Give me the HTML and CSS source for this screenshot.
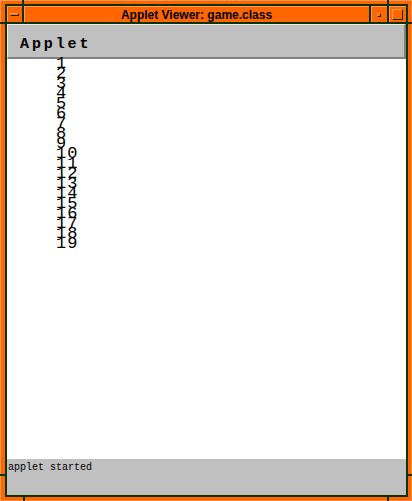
FILE: index.html
```html
<!DOCTYPE html>
<html>
<head>
<meta charset="utf-8">
<link rel="stylesheet" href="styles.css">
</head>
<body>
<div class="frame">
  <span class="notch notch-top-l"></span>
  <span class="notch notch-top-r"></span>
  <span class="notch notch-bot-l"></span>
  <span class="notch notch-bot-r"></span>
  <span class="notch notch-left-t"></span>
  <span class="notch notch-left-b"></span>
  <span class="notch notch-right-t"></span>
  <span class="notch notch-right-b"></span>
  <div class="client">
    <div class="titlebar">
      <div class="tb-menu"><span class="dash"></span></div>
      <div class="tb-title">Applet Viewer: game.class</div>
      <div class="tb-min"><span class="dot"></span></div>
      <div class="tb-max"><span class="sq"></span></div>
    </div>
    <div class="menubar"><span class="menu-label">Applet</span></div>
    <div class="content">
      <div class="num">1</div>
      <div class="num">2</div>
      <div class="num">3</div>
      <div class="num">4</div>
      <div class="num">5</div>
      <div class="num">6</div>
      <div class="num">7</div>
      <div class="num">8</div>
      <div class="num">9</div>
      <div class="num">10</div>
      <div class="num">11</div>
      <div class="num">12</div>
      <div class="num">13</div>
      <div class="num">14</div>
      <div class="num">15</div>
      <div class="num">16</div>
      <div class="num">17</div>
      <div class="num">18</div>
      <div class="num">19</div>
    </div>
    <div class="status">applet started</div>
  </div>
</div>
</body>
</html>
```

FILE: styles.css
```css
* { box-sizing: border-box; }
html, body { margin: 0; padding: 0; background: #ff6600; }

.frame {
  position: relative;
  width: 412px;
  height: 501px;
  background: #ff6600;
  padding: 4px 4px 4px 5px;
  box-shadow: inset 1px 1px 0 #ff9a5c, inset -1px -1px 0 #ff8a45;
}

.notch { position: absolute; background: #0a3300; }
.notch-top-l { left: 22px; top: 0; width: 2px; height: 4px; }
.notch-top-r { left: 387px; top: 0; width: 2px; height: 4px; }
.notch-bot-l { left: 23px; top: 497px; width: 2px; height: 4px; }
.notch-bot-r { left: 387px; top: 497px; width: 2px; height: 4px; }
.notch-left-t { left: 0; top: 22px; width: 5px; height: 2px; }
.notch-left-b { left: 0; top: 474px; width: 5px; height: 2px; }
.notch-right-t { left: 408px; top: 22px; width: 4px; height: 2px; }
.notch-right-b { left: 408px; top: 474px; width: 4px; height: 2px; }

.client {
  height: 100%;
  border: 2px solid #0a3300;
  display: flex;
  flex-direction: column;
  background: #ffffff;
}

.titlebar {
  display: flex;
  height: 18px;
  flex: none;
  border-bottom: 2px solid #0a3300;
  background: #ff6600;
}
.tb-menu {
  width: 17px;
  border-right: 2px solid #0a3300;
  display: flex;
  align-items: center;
  justify-content: center;
  box-shadow: inset 1px 1px 0 #ff9a5c;
}
.dash {
  display: block;
  width: 9px;
  height: 3px;
  margin-top: 1px;
  border-top: 1px solid #ff9a5c;
  border-left: 1px solid #ff9a5c;
  border-bottom: 1px solid #0a3300;
  border-right: 1px solid #0a3300;
}
.tb-title {
  flex: 1;
  text-align: center;
  font-family: "Liberation Sans", Arial, sans-serif;
  font-weight: bold;
  font-size: 12px;
  line-height: 16px;
  padding-top: 1px;
  color: #000;
  box-shadow: inset 1px 1px 0 #ff9a5c;
}
.tb-min {
  width: 18px;
  border-left: 2px solid #0a3300;
  display: flex;
  align-items: center;
  justify-content: center;
  box-shadow: inset 1px 1px 0 #ff9a5c;
}
.dot {
  display: block;
  width: 4px;
  height: 4px;
  margin-top: 1px;
  border-right: 1px solid #0a3300;
  border-bottom: 1px solid #0a3300;
  border-top: 1px solid #ff9a5c;
  border-left: 1px solid #ff9a5c;
}
.tb-max {
  width: 19px;
  border-left: 2px solid #0a3300;
  display: flex;
  align-items: center;
  justify-content: center;
  box-shadow: inset 1px 1px 0 #ff9a5c;
}
.sq {
  display: block;
  width: 11px;
  height: 11px;
  margin-top: 1px;
  border-right: 1px solid #0a3300;
  border-bottom: 1px solid #0a3300;
  border-top: 1px solid #ff9a5c;
  border-left: 1px solid #ff9a5c;
}

.menubar {
  flex: none;
  height: 35px;
  background: #c0c0c0;
  border-top: 1px solid #ececec;
  border-left: 1px solid #ececec;
  border-right: 2px solid #808080;
  border-bottom: 2px solid #808080;
  padding: 9px 0 0 12px;
}
.menu-label {
  font-family: "Liberation Mono", "Courier New", monospace;
  font-weight: bold;
  font-size: 15px;
  letter-spacing: 2.9px;
  line-height: 16px;
  color: #000;
}

.content {
  flex: none;
  height: 400px;
  background: #fff;
  padding-left: 49px;
  padding-top: 0;
}
.num {
  font-family: "Liberation Mono", "Courier New", monospace;
  font-size: 17px;
  letter-spacing: 1px;
  line-height: 10px;
  height: 10px;
  color: #000;
}

.status {
  flex: 1;
  background: #c0c0c0;
  font-family: "Liberation Mono", "Courier New", monospace;
  font-size: 10px;
  line-height: 12px;
  padding: 3px 0 0 1px;
  color: #000;
}
```
